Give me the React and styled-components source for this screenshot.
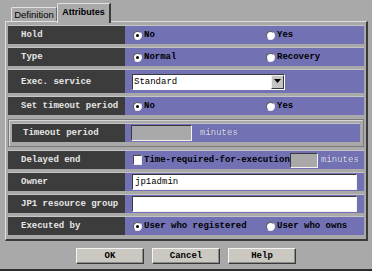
import styled, { createGlobalStyle } from 'styled-components';

const GlobalStyle = createGlobalStyle`
  html, body {
    margin: 0;
    padding: 0;
    background: #a9a9a9;
    overflow: hidden;
  }
  * {
    box-sizing: border-box;
  }
`;

const Window = styled.div`
  width: 372px;
  height: 271px;
  overflow: hidden;
  background: #a9a9a9;
  padding-top: 3px;
  border-bottom: 2px solid #2e2e2e;
  display: flex;
  flex-direction: column;
  font-family: "Liberation Mono", "Courier New", monospace;
`;

const TabStrip = styled.div`
  display: flex;
  align-items: flex-end;
  height: 18px;
  padding-left: 11px;
  position: relative;
  z-index: 1;
`;

const Tab = styled.div`
  width: ${p => (p.$active ? '54px' : '46px')};
  height: ${p => (p.$active ? '20px' : '14px')};
  margin-bottom: ${p => (p.$active ? '-2px' : '0')};
  display: flex;
  align-items: center;
  justify-content: center;
  padding-bottom: ${p => (p.$active ? '3px' : '0')};
  font-family: "Liberation Sans", Arial, sans-serif;
  font-size: ${p => (p.$active ? '9px' : '9.5px')};
  font-weight: ${p => (p.$active ? 'bold' : 'normal')};
  color: #000;
  background: #a9a9a9;
  border-top: 1px solid #e2e2e2;
  border-left: 1px solid #e2e2e2;
  border-right: ${p => (p.$active ? '2px solid #3a3a3a' : '1px solid #6a6a6a')};
  border-top-left-radius: 2px;
`;

const Panel = styled.div`
  margin-left: 5px;
  width: 363px;
  border-top: 1px solid #e0e0e0;
  border-left: 1px solid #e0e0e0;
  border-right: 2px solid #3a3a3a;
  border-bottom: 2px solid #3a3a3a;
  padding: 4px 2px;
  display: flex;
  flex-direction: column;
  gap: 4px;
`;

const Row = styled.div`
  display: flex;
  height: ${p => (p.$tall ? '23px' : '18px')};
  box-shadow: 0 -1px 0 #c4c4c4;
`;

const Label = styled.div`
  width: ${p => p.$w || 117}px;
  flex: none;
  background: #3c3c3c;
  color: #e6e6e6;
  font-size: 9px;
  font-weight: bold;
  padding-left: ${p => p.$indent ?? 13}px;
  display: flex;
  align-items: center;
  white-space: nowrap;
`;

const Value = styled.div`
  flex: 1;
  min-width: 0;
  overflow: hidden;
  background: #7171b3;
  display: flex;
  align-items: center;
  padding-left: ${p => p.$pad ?? 8}px;
  color: #000;
  font-size: 9px;
  font-weight: bold;
  white-space: nowrap;
`;

const Option = styled.div`
  display: flex;
  align-items: center;
  gap: 2px;
  flex: none;
  width: ${p => p.$w || 133}px;
`;

const Radio = styled.span`
  width: 9px;
  height: 9px;
  border-radius: 50%;
  background: #fff;
  border: 1px solid;
  border-color: #5a5a5a #eeeeee #eeeeee #5a5a5a;
  display: flex;
  align-items: center;
  justify-content: center;
  flex: none;
  &::after {
    content: '';
    width: 3px;
    height: 3px;
    border-radius: 50%;
    background: ${p => (p.$on ? '#000' : 'transparent')};
  }
`;

const Check = styled.span`
  width: 9px;
  height: 10px;
  background: #fff;
  border: 1px solid;
  border-color: #4a4a4a #eeeeee #eeeeee #4a4a4a;
  flex: none;
`;

const Select = styled.div`
  width: 153px;
  height: 16px;
  background: #fff;
  border: 1px solid;
  border-color: #3a3a3a #ffffff #ffffff #3a3a3a;
  display: flex;
  align-items: center;
  justify-content: space-between;
  padding-left: 1px;
  font-weight: normal;
`;

const ArrowButton = styled.span`
  width: 13px;
  height: 14px;
  background: #c4c4c4;
  border: 1px solid;
  border-color: #f2f2f2 #3a3a3a #3a3a3a #f2f2f2;
  display: flex;
  align-items: center;
  justify-content: center;
`;

const Field = styled.div`
  width: ${p => p.$w}px;
  height: ${p => p.$h || 16}px;
  background: ${p => (p.$disabled ? '#a9a9a9' : '#fff')};
  border: 1px solid;
  border-color: #3a3a3a #f4f4f4 #f4f4f4 #3a3a3a;
  display: flex;
  align-items: center;
  padding-left: 2px;
  font-weight: normal;
  flex: none;
`;

const Hint = styled.span`
  margin-left: ${p => p.$gap || 8}px;
  color: #dadae8;
  font-weight: normal;
  text-shadow: 1px 0 0 #5c5c96;
`;

const Group = styled.div`
  border: 1px solid #7a7a7a;
  box-shadow: inset 1px 1px 0 #d6d6d6;
  padding: 4px 3px;
`;

const ButtonBar = styled.div`
  display: flex;
  justify-content: center;
  gap: 8px;
  margin-top: 7px;
`;

const Button = styled.button`
  width: 68px;
  height: 16px;
  padding: 0;
  background: #cbc8c2;
  border: 1px solid;
  border-color: #f4f4f4 #3a3a3a #3a3a3a #f4f4f4;
  box-shadow: inset -1px -1px 0 #8a8a8a;
  font-family: "Liberation Mono", "Courier New", monospace;
  font-size: 9px;
  font-weight: bold;
  color: #000;
`;

const Choice = ({ on, children, w }) => (
  <Option $w={w}>
    <Radio $on={on} />
    {children}
  </Option>
);

export default function App() {
  return (
    <>
      <GlobalStyle />
      <Window>
        <TabStrip>
          <Tab>Definition</Tab>
          <Tab $active>Attributes</Tab>
        </TabStrip>
        <Panel>
          <Row>
            <Label>Hold</Label>
            <Value>
              <Choice on>No</Choice>
              <Choice>Yes</Choice>
            </Value>
          </Row>
          <Row>
            <Label>Type</Label>
            <Value>
              <Choice on>Normal</Choice>
              <Choice>Recovery</Choice>
            </Value>
          </Row>
          <Row $tall>
            <Label>Exec. service</Label>
            <Value $pad={7}>
              <Select>
                Standard
                <ArrowButton>
                  <svg width="7" height="5" viewBox="0 0 7 5">
                    <path d="M0 0h7L3.5 4z" fill="#000" />
                  </svg>
                </ArrowButton>
              </Select>
            </Value>
          </Row>
          <Row>
            <Label>Set timeout period</Label>
            <Value>
              <Choice on>No</Choice>
              <Choice>Yes</Choice>
            </Value>
          </Row>
          <Group>
            <Row>
              <Label $w={113} $indent={11}>Timeout period</Label>
              <Value $pad={6}>
                <Field $w={61} $disabled />
                <Hint>minutes</Hint>
              </Value>
            </Row>
          </Group>
          <Row>
            <Label>Delayed end</Label>
            <Value>
              <Option $w={157}>
                <Check />
                Time-required-for-execution
              </Option>
              <Field $w={28} $h={15} $disabled />
              <Hint $gap={3}>minutes</Hint>
            </Value>
          </Row>
          <Row>
            <Label>Owner</Label>
            <Value $pad={7}>
              <Field $w={225}>jp1admin</Field>
            </Value>
          </Row>
          <Row>
            <Label>JP1 resource group</Label>
            <Value $pad={7}>
              <Field $w={225} />
            </Value>
          </Row>
          <Row>
            <Label>Executed by</Label>
            <Value>
              <Choice on>User who registered</Choice>
              <Choice>User who owns</Choice>
            </Value>
          </Row>
        </Panel>
        <ButtonBar>
          <Button>OK</Button>
          <Button>Cancel</Button>
          <Button>Help</Button>
        </ButtonBar>
      </Window>
    </>
  );
}
